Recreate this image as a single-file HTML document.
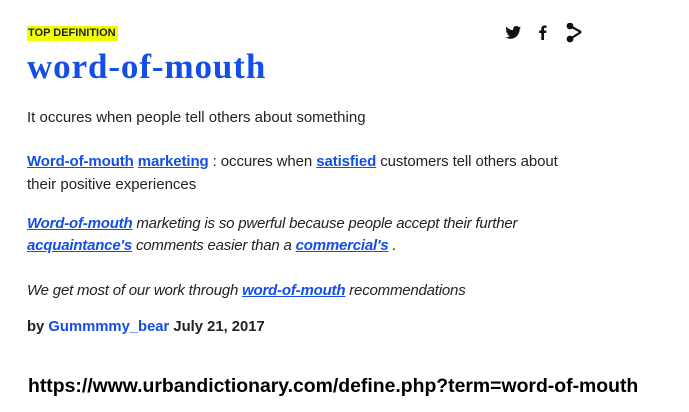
<!DOCTYPE html>
<html><head><style>
body{margin:0;width:689px;height:412px;background:#fff;position:relative;font-family:"Liberation Sans",sans-serif;color:#222;overflow:hidden}
.a{position:absolute;white-space:nowrap}
a{color:#134fe6;font-weight:bold;text-decoration:underline}
.t{font-size:15px}
.i{font-style:italic;letter-spacing:-0.2px}
</style></head><body>
<div class="a" style="left:27px;top:26px;background:#efff00;font-size:11px;font-weight:bold;padding:1px 2px 1px 1px;line-height:13px;color:#222">TOP DEFINITION</div>
<div class="a" style="left:27px;top:47px;font-family:'Liberation Serif',serif;font-weight:bold;font-size:35px;color:#134fe6;letter-spacing:0.9px">word-of-mouth</div>
<svg class="a" style="left:504px;top:23px" width="80" height="20" viewBox="0 0 80 20">
<path d="M17 4.5c-.6.3-1.2.4-1.9.5.7-.4 1.2-1 1.4-1.8-.6.4-1.3.6-2 .8-1.2-1.3-3.3-1.3-4.5 0-.6.6-.9 1.5-.9 2.4 0 .3 0 .5.1.7-2.6-.1-5.1-1.4-6.8-3.4-.9 1.4-.4 3.3 1 4.2-.5 0-1-.2-1.4-.4 0 1.5 1.1 2.8 2.5 3.1-.5.1-1 .2-1.4.1.4 1.3 1.6 2.2 3 2.2-1.4 1.1-3.2 1.6-4.8 1.4 1.5.9 3.2 1.5 5 1.5 6 0 9.3-5 9.3-9.3v-.4c.5-.5 1.1-1 1.4-1.6z" fill="#111"/>
<path d="M40 17V10h2.2l.3-2.5H40V6c0-.7.2-1.2 1.2-1.2h1.4V2.6c-.3 0-1-.1-2-.1-2 0-3.3 1.2-3.3 3.4v1.6h-2.2V10h2.2v7z" fill="#111"/>
<g stroke="#111" stroke-width="2.2" fill="#111"><line x1="66" y1="3" x2="77" y2="9"/><line x1="77" y1="9" x2="66" y2="16"/><circle cx="66" cy="3" r="2.3"/><circle cx="66" cy="16" r="2.3"/></g>
</svg>
<div class="a t" style="left:27px;top:109px">It occures when people tell others about something</div>
<div class="a t" style="left:27px;top:153px;letter-spacing:-0.1px"><a>Word-of-mouth</a> <a>marketing</a> : occures when <a>satisfied</a> customers tell others about</div>
<div class="a t" style="left:27px;top:176px">their positive experiences</div>
<div class="a t i" style="left:27px;top:215px"><a>Word-of-mouth</a> marketing is so pwerful because people accept their further</div>
<div class="a t i" style="left:27px;top:237px"><a>acquaintance's</a> comments easier than a <a>commercial's</a> .</div>
<div class="a t i" style="left:27px;top:282px"><a>word-of-mouth</a><span style="position:absolute;left:-9999px"></span></div>
<div class="a t i" style="left:27px;top:282px;background:#fff">We get most of our work through <a>word-of-mouth</a> recommendations</div>
<div class="a" style="left:27px;top:319px;font-size:14.8px;font-weight:bold">by <a style="text-decoration:none">Gummmmy_bear</a> July 21, 2017</div>
<div class="a" style="left:28px;top:375px;font-size:19.4px;font-weight:bold;color:#000">https://www.urbandictionary.com/define.php?term=word-of-mouth</div>
</body></html>
